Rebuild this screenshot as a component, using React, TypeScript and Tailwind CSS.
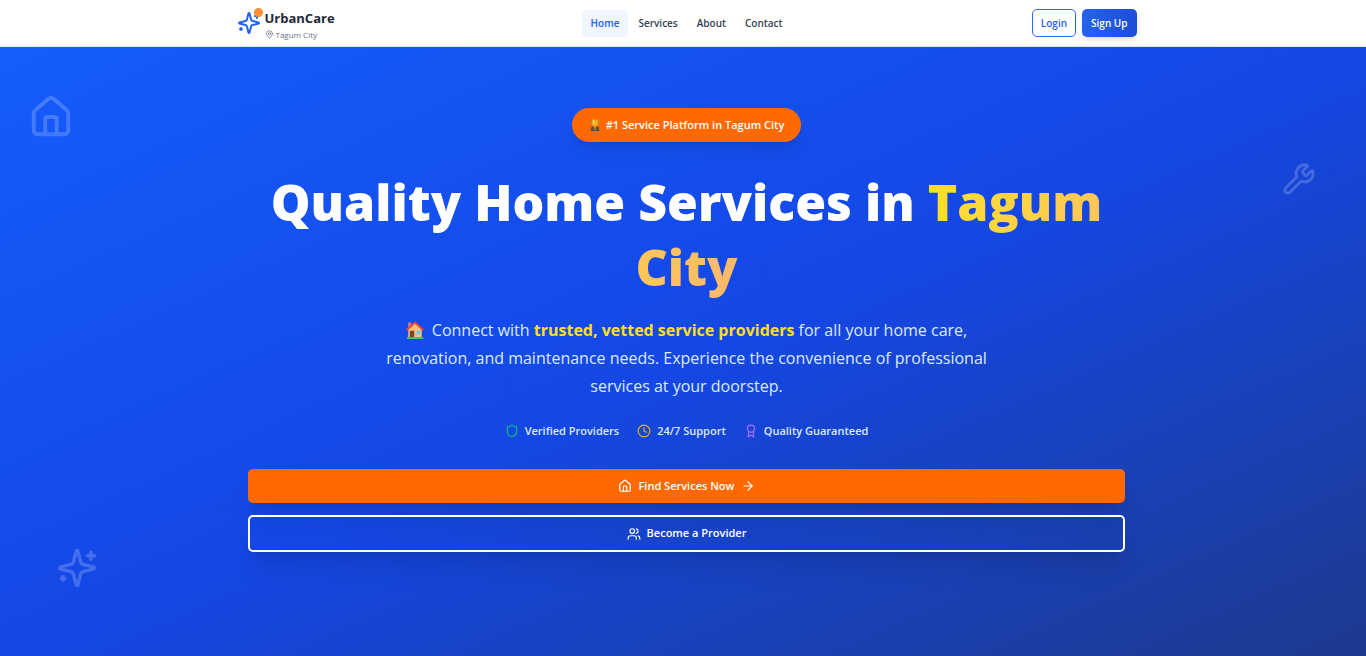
import { ArrowRight, Award, Clock, House, MapPin, Shield, Users, Wrench } from "lucide-react";

const navItems = ["Home", "Services", "About", "Contact"];

const features = [
  { label: "Verified Providers", Icon: Shield, color: "text-[#05c774]" },
  { label: "24/7 Support", Icon: Clock, color: "text-[#e5b020]" },
  { label: "Quality Guaranteed", Icon: Award, color: "text-[#b06cf8]" },
];

function SparklesIcon({ className }: { className: string }) {
  return (
    <svg
      viewBox="0 0 24 24"
      className={className}
      fill="none"
      stroke="currentColor"
      strokeWidth="2"
      strokeLinecap="round"
      strokeLinejoin="round"
      aria-hidden="true"
    >
      <path d="M9.937 15.5A2 2 0 0 0 8.5 14.063l-6.135-1.582a.5.5 0 0 1 0-.962L8.5 9.936A2 2 0 0 0 9.937 8.5l1.582-6.135a.5.5 0 0 1 .963 0L14.063 8.5A2 2 0 0 0 15.5 9.937l6.135 1.581a.5.5 0 0 1 0 .964L15.5 14.063a2 2 0 0 0-1.437 1.437l-1.582 6.135a.5.5 0 0 1-.963 0z" />
      <path d="M20 3v4" />
      <path d="M22 5h-4" />
      <path d="M4 17v2" />
      <path d="M5 18H3" />
    </svg>
  );
}

function TrophyEmoji() {
  return (
    <svg viewBox="0 0 24 24" className="size-3" role="img" aria-label="Trophy">
      <path d="M3 2h18v5c0 4-3 6-6 7l-1 4h-4l-1-4c-3-1-6-3-6-7z" fill="#c98421" />
      <path d="M6 1h12v8c0 4-3 6-6 6s-6-2-6-6z" fill="#f6a723" />
      <path d="M8 2h3v9c-2-.5-3-2-3-4z" fill="#ffc94d" />
      <path d="M5 15h4l1 3h4l1-3h4l2 9H3z" fill="#5a4a45" />
      <path d="M9 19h6v2H9z" fill="#e39b2d" />
    </svg>
  );
}

function HouseEmoji() {
  return (
    <svg
      viewBox="0 0 24 24"
      className="mr-2 inline-block size-[18px] align-[-3px]"
      role="img"
      aria-label="House"
    >
      <path d="M3 2h4v8H3z" fill="#c98a6b" />
      <path d="M3 11 12 3l9 8v11H3z" fill="#f5c178" />
      <path d="M1 12 12 2l11 10" fill="none" stroke="#f2403f" strokeWidth="2.500" />
      <path d="M5 13h6v9H5z" fill="#7d4533" />
      <path d="M14 13h5v5h-5z" fill="#75c6f5" />
      <path d="M1 21.500h22v2.500H1z" fill="#3fc380" />
    </svg>
  );
}

function Header() {
  return (
    <header className="border-b border-gray-200 bg-white pl-[7px]">
      <div className="mx-auto flex h-[46px] max-w-[900px] items-center justify-between">
        <a href="#home" className="flex w-[152px] items-center gap-1">
          <span className="relative">
            <SparklesIcon className="size-6 text-[#2563eb]" />
            <span className="absolute -top-[3px] -right-[2px] size-[9px] rounded-full bg-[#ff8f35]" />
          </span>
          <span className="flex flex-col pt-1">
            <span className="text-[13px] leading-[19px] font-bold text-[#1e2939]">UrbanCare</span>
            <span className="flex items-center gap-[2px] text-[8px] leading-[14px] text-gray-500">
              <MapPin className="size-[9px]" />
              Tagum City
            </span>
          </span>
        </a>
        <nav className="flex gap-px">
          {navItems.map((item, index) => (
            <a
              key={item}
              href={"#" + item.toLowerCase()}
              className={
                index === 0
                  ? "rounded-[5px] bg-[#eff6ff] px-[9px] py-[6px] text-[10px] leading-[15px] font-semibold text-[#2563eb]"
                  : "rounded-[5px] px-[9px] py-[6px] text-[10px] leading-[15px] font-semibold text-[#364153]"
              }
            >
              {item}
            </a>
          ))}
        </nav>
        <div className="flex w-[152px] justify-end gap-[6px]">
          <button className="h-7 rounded-[5px] border border-[#2b6bf0] px-2 text-[10px] font-semibold text-[#2563eb]">
            Login
          </button>
          <button className="h-7 rounded-[5px] bg-linear-to-r from-[#2563eb] to-[#1d4ed8] px-[9px] text-[10px] font-semibold text-white shadow-md">
            Sign Up
          </button>
        </div>
      </div>
    </header>
  );
}

export default function App() {
  return (
    <div className="flex min-h-screen flex-col font-['Open_Sans','Noto_Sans',sans-serif]">
      <Header />
      <main className="relative flex-1 bg-linear-to-br from-[#155dfc] via-[#1447e6] to-[#1c398e] pt-[61px] pb-[102px] pl-[7px]">
        <House className="absolute top-[47px] left-7 size-[46px] text-white opacity-20" />
        <Wrench className="absolute top-[115px] right-[50px] size-[34px] text-white opacity-20" />
        <SparklesIcon className="absolute bottom-[67px] left-[56px] size-[42px] text-white opacity-20" />
        <section className="mx-auto flex max-w-[877px] flex-col items-center text-center">
          <p className="flex h-[34px] items-center gap-[5px] rounded-full bg-[#ff6900] px-[17px] text-[11px] font-semibold text-white shadow-lg">
            <TrophyEmoji />
            #1 Service Platform in Tagum City
          </p>
          <h1 className="mt-7 text-[50px] leading-[65px] font-extrabold text-white">
            Quality Home Services in{" "}
            <span className="bg-linear-to-r from-[#ffdf20] to-[#ffb86a] bg-clip-text text-transparent">
              Tagum City
            </span>
          </h1>
          <p className="mt-4 max-w-[624px] text-[16px] leading-7 text-[#dbeafe]">
            <HouseEmoji />
            Connect with <strong className="font-bold text-[#ffdf20]">trusted, vetted service providers</strong>{" "}
            for all your home care, renovation, and maintenance needs. Experience the convenience of
            professional services at your doorstep.
          </p>
          <ul className="mt-[23px] flex gap-[18px] text-[11px] leading-4 font-semibold text-[#dbeafe]">
            {features.map(({ label, Icon, color }) => (
              <li key={label} className="flex items-center gap-[6px]">
                <Icon className={"size-[14px] " + color} />
                {label}
              </li>
            ))}
          </ul>
          <div className="mt-[30px] flex w-full flex-col gap-3 text-[11px] font-semibold text-white">
            <button className="flex h-[34px] items-center justify-center gap-[6px] rounded-[5px] bg-[#ff6900] shadow-xl">
              <House className="size-[14px]" />
              Find Services Now
              <ArrowRight className="size-[14px]" />
            </button>
            <button className="flex h-[37px] items-center justify-center gap-[6px] rounded-[5px] border-2 border-white shadow-xl">
              <Users className="size-[14px]" />
              Become a Provider
            </button>
          </div>
        </section>
      </main>
    </div>
  );
}
